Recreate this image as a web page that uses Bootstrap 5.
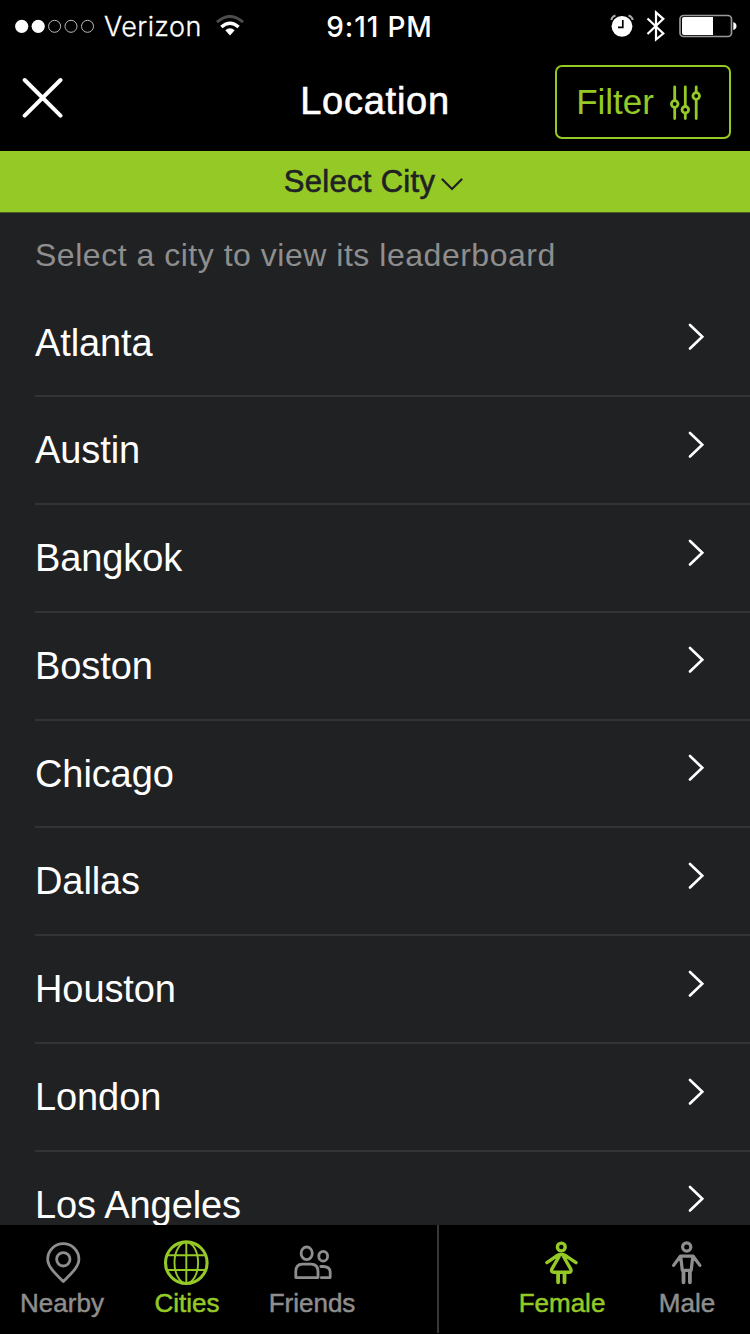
<!DOCTYPE html>
<html lang="en">
<head>
<meta charset="utf-8">
<meta name="viewport" content="width=device-width, initial-scale=1">
<title>Location</title>
<link href="https://cdn.jsdelivr.net/npm/bootstrap@5.3.0/dist/css/bootstrap.min.css" rel="stylesheet">
<style>
  :root { --lime: #95c926; --ink: #202123; --muted: #8e8e8e; --rule: #323335; }
  body { font-family: "Liberation Sans", Arial, sans-serif; background: var(--ink); color: #fff; }
  svg { display: block; flex: none; }
  .screen { height: 1334px; }
  .status-bar { height: 50px; font-family: Inter, sans-serif; font-size: 27px; line-height: 50px; padding: 1px 13px 0 15px; }
  .carrier { letter-spacing: .4px; margin-left: 9px; font-weight: 300; padding-top: 2px; -webkit-text-stroke: .3px; }
  .clock { font-size: 28px; font-weight: 500; letter-spacing: .85px; padding: 2px 0 0 7px; }
  .title-bar { height: 101px; padding: 15px 19px 0 19px; }
  .side { flex: 1 1 0; }
  .close-icon { margin: 12px 0 0 2px; }
  .page-title { font-size: 38px; line-height: 44px; letter-spacing: .75px; margin: 14px 0 0; font-weight: 400; -webkit-text-stroke: .6px; }
  .btn-filter { --bs-btn-color: var(--lime); --bs-btn-border-color: var(--lime); --bs-btn-border-width: 2px; --bs-btn-border-radius: 7px;
    --bs-btn-padding-x: 0; --bs-btn-padding-y: 0; width: 176px; height: 74px; font-size: 35px; line-height: 40px; }
  .btn-filter svg { margin: 1px 9px 0 15px; }
  .city-bar { height: 62px; background: var(--lime); color: var(--ink); border-bottom: 1px solid #4c5f2a; font-size: 31px; line-height: 60px; letter-spacing: .3px; padding-right: 3px; -webkit-text-stroke: .6px; }
  .hint { height: 76.5px; padding: 22px 0 0 35px; margin: 0; font-size: 32px; line-height: 40px; letter-spacing: .52px; color: var(--muted); }
  .city-list { --bs-list-group-bg: transparent; --bs-list-group-color: #fff; --bs-list-group-border-color: var(--rule); --bs-list-group-border-radius: 0; padding-left: 35px; }
  .city-list .list-group-item { height: 107.8px; flex: none; padding: 0 45px 0 0; border-width: 0 0 2px; font-size: 38px; line-height: 107px; letter-spacing: -.1px; }
  .city-list svg { margin-top: 32.5px; }
  .tab-bar { height: 109px; background: #000; color: var(--muted); font-size: 26px; line-height: 30px; -webkit-text-stroke: .5px; }
  .tab-bar a { color: inherit; padding-top: 13px; }
  .tab-bar span { margin-right: 1px; }
  .tab-bar .on { color: var(--lime); }
  .divider { width: 2px; height: 108px; background: #35383a; }
  .tab-bar svg, .btn-filter svg { fill: none; stroke: currentColor; stroke-linecap: round; stroke-linejoin: round; }
</style>
</head>
<body>
<div class="screen d-flex flex-column overflow-hidden">
  <header class="bg-black">
    <div class="status-bar d-flex align-items-center">
      <div class="side d-flex align-items-center">
        <svg width="80" height="14" viewBox="0 0 80 14" fill="none" stroke="#bbb" stroke-width="1"><g fill="#fff" stroke="none"><circle cx="6.7" cy="7.3" r="6.6"/><circle cx="23.2" cy="7.3" r="6.6"/></g><circle cx="39.6" cy="7.3" r="6"/><circle cx="56" cy="7.3" r="6"/><circle cx="72.5" cy="7.3" r="6"/></svg>
        <span class="carrier">Verizon</span>
        <svg style="margin-left:14px" width="28" height="22" viewBox="0 0 28 22" fill="none"><path d="M1 7.2Q14-4.3 27 7.2" stroke="#4c4c4c" stroke-width="3"/><path d="M5.4 12Q14 4.4 22.6 12" stroke="#fff" stroke-width="3.4"/><path d="M9.3 15.2Q14 11.5 18.7 15.2L14 20.5Z" fill="#fff"/></svg>
      </div>
      <span class="clock">9:11 PM</span>
      <div class="side d-flex align-items-center justify-content-end">
        <svg width="24" height="24" viewBox="0 0 24 24" fill="none"><path d="M1.2 6Q2 2.5 5.5 1.5M18.5 1.5Q22 2.5 22.8 6" stroke="#aaa" stroke-width="2"/><circle cx="12" cy="12.3" r="10.4" fill="#fff"/><path d="M12.8 6V13.4H8" stroke="#000" stroke-width="1.7"/></svg>
        <svg style="margin:0 13px 0 12px" width="20" height="32" viewBox="0 0 20 32" fill="none" stroke="#fff" stroke-width="2.2"><path d="M1.5 8.5L17.3 23.5L10 29.5V2.5L17.3 8.8L1.5 24"/></svg>
        <svg width="58" height="24" viewBox="0 0 58 24"><rect x="1" y="1.5" width="51.5" height="21" rx="3.5" fill="none" stroke="#999" stroke-width="1.7"/><path d="M3 5a2 2 0 0 1 2-2H34V21H5a2 2 0 0 1-2-2Z" fill="#fff"/><path d="M54.3 8Q57.5 9 57.5 12T54.3 16Z" fill="#fff"/></svg>
      </div>
    </div>
    <div class="title-bar d-flex align-items-start">
      <div class="side">
        <svg class="close-icon" width="42" height="42" viewBox="0 0 42 42" stroke="#fff" stroke-width="4" stroke-linecap="round"><path d="M3.7 3L39.5 38.7M39.5 3L3.7 38.7"/></svg>
      </div>
      <h1 class="page-title">Location</h1>
      <div class="side d-flex justify-content-end">
        <button class="btn btn-filter d-flex align-items-center justify-content-center" type="button">Filter
          <svg width="32" height="36" viewBox="0 0 32 36" stroke-width="2.8"><path d="M5.7 2V15.5M5.7 22.5V33.5M16.3 2V21.5M16.3 28V33.5M27.2 2V7.5M27.2 14.5V33.5"/><circle cx="5.7" cy="19" r="3.3"/><circle cx="16.3" cy="24.8" r="3.3"/><circle cx="27.2" cy="11" r="3.3"/></svg>
        </button>
      </div>
    </div>
  </header>
  <div class="city-bar d-flex justify-content-center align-items-center flex-shrink-0">Select City
    <svg style="margin:5px 0 0 6px" width="22" height="14" viewBox="0 0 22 14" fill="none" stroke="currentColor" stroke-width="2.2" stroke-linecap="round"><path d="M1.5 2.5L11 12L20.5 2.5"/></svg>
  </div>
  <main class="flex-grow-1 overflow-hidden" style="min-height:0">
    <p class="hint">Select a city to view its leaderboard</p>
    <div class="list-group city-list" id="cities"></div>
  </main>
  <nav class="tab-bar row g-0 text-center flex-shrink-0">
    <a class="col-2 d-flex flex-column align-items-center text-decoration-none" href="#">
      <svg width="51" height="50" viewBox="0 0 51 50" stroke-width="2.8"><path d="M26.3 43.5C20 37 10.7 29.5 10.7 21.3A15.6 15.6 0 0 1 41.9 21.3C41.9 29.5 32.6 37 26.3 43.5Z"/><circle cx="26.3" cy="21.3" r="6.7"/></svg>
      <span>Nearby</span></a>
    <a class="col-2 on d-flex flex-column align-items-center text-decoration-none" href="#">
      <svg width="51" height="50" viewBox="0 0 51 50" stroke-width="1.9"><circle cx="24.3" cy="24.7" r="20.8" stroke-width="3.1"/><ellipse cx="24.3" cy="24.7" rx="11.8" ry="20.5"/><path d="M24.3 4V45M5.5 17.3H43M5.5 32H43"/></svg>
      <span>Cities</span></a>
    <a class="col-2 d-flex flex-column align-items-center text-decoration-none" href="#">
      <svg width="51" height="50" viewBox="0 0 51 50" stroke-width="2.8"><ellipse cx="19.7" cy="15.3" rx="5.6" ry="6.3"/><ellipse cx="36.2" cy="18.2" rx="4.4" ry="4.9"/><path d="M8.8 39.6V33.5Q8.8 26.1 15.5 26.1H24Q31 26.1 31 33.5V39.6ZM33.8 28.5H36Q43.2 28.5 43.2 34.5V39.6H34.3"/></svg>
      <span>Friends</span></a>
    <div class="col-2 d-flex justify-content-center"><div class="divider"></div></div>
    <a class="col-2 on d-flex flex-column align-items-center text-decoration-none" href="#">
      <svg width="51" height="50" viewBox="0 0 51 50" stroke-width="3.4"><circle cx="24.3" cy="9" r="3.9"/><path d="M9.9 24.6L20 17.6Q24.3 15.4 28.6 17.6L39 24.6M22.4 18L14.8 31.2Q13.8 34.2 17 34.2H31.8Q34.8 34.2 33.8 31.2L26.2 18"/><path d="M21.1 35V44.3M27.5 35V44.3" stroke-width="3.8"/></svg>
      <span>Female</span></a>
    <a class="col-2 d-flex flex-column align-items-center text-decoration-none" href="#">
      <svg width="51" height="50" viewBox="0 0 51 50" stroke-width="3.2"><circle cx="24.7" cy="9" r="4.1"/><path d="M11.6 27.4L18.3 18.2H31.2L37.9 27.4M18.7 18.5L20.3 32.3H29.2L30.8 18.5"/><path d="M21.5 33V44.3M27.9 33V44.3" stroke-width="3.8"/></svg>
      <span>Male</span></a>
  </nav>
</div>
<script src="https://cdn.jsdelivr.net/npm/bootstrap@5.3.0/dist/js/bootstrap.bundle.min.js"></script>
<script>
  const cities = ["Atlanta", "Austin", "Bangkok", "Boston", "Chicago", "Dallas", "Houston", "London", "Los Angeles"];
  document.getElementById("cities").innerHTML = cities.map(c => `
    <a href="#" class="list-group-item d-flex justify-content-between">${c}
      <svg width="18" height="28" viewBox="0 0 18 28" fill="none" stroke="#fff" stroke-width="2.6" stroke-linecap="round"><path d="M3 3L15.3 14.8L3 26.5"/></svg>
    </a>`).join("");
</script>
</body>
</html>
